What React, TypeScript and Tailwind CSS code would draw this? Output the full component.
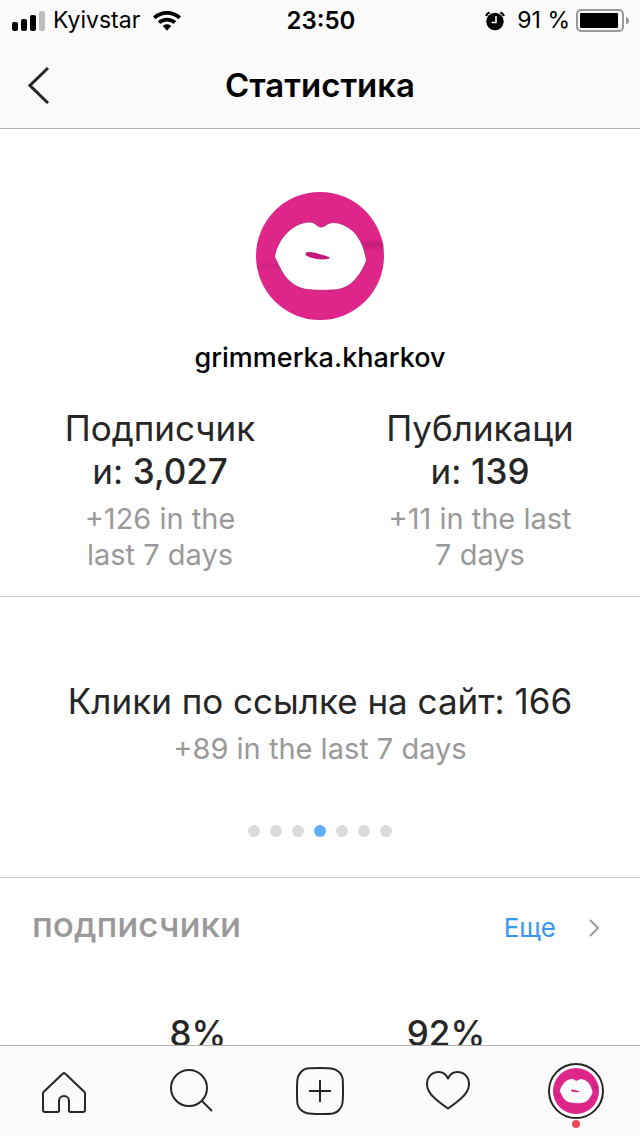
const periods = {
  followers: '+126 in the last 7 days',
  posts: '+11 in the last 7 days',
  clicks: '+89 in the last 7 days',
}

const slides = ['Показы', 'Охват', 'Просмотры профиля', 'Клики по ссылке', 'Эл. письма', 'Звонки', 'Маршруты']
const activeSlide = 3

export default function App() {
  return (
    <div className="flex h-screen flex-col bg-white font-['Inter','Liberation_Sans',sans-serif] text-[#262626]">
      <header className="shrink-0 border-b border-[#b2b2b2] bg-[#fbfbfb] text-black">
        <StatusBar />
        <div className="grid h-[87px] grid-cols-[1fr_auto_1fr] items-center px-7">
          <button type="button" aria-label="Назад" className="justify-self-start text-[#262626]">
            <svg width="22" height="38" viewBox="0 0 22 38" fill="none" stroke="currentColor" strokeWidth="3">
              <path d="M20 2 2 19.500 20 37" />
            </svg>
          </button>
          <h1 className="text-[33px] leading-11 font-semibold">Статистика</h1>
        </div>
      </header>

      <main className="min-h-0 flex-1 overflow-hidden">
        <section className="flex flex-col items-center border-b border-[#c7c7cc] pt-[63px] pb-[23px]">
          <LipsAvatar className="size-32" />
          <p className="mt-5 text-[27px] leading-9 font-medium text-black">grimmerka.kharkov</p>
          <div className="mt-[31px] grid w-full grid-cols-2 justify-items-center">
            <Stat label="Подписчики" value="3,027" note={periods.followers} />
            <Stat label="Публикации" value="139" note={periods.posts} />
          </div>
        </section>

        <section className="flex flex-col items-center border-b border-[#c7c7cc] pt-[82px] pb-10">
          <p className="text-[35px] leading-11">Клики по ссылке на сайт: 166</p>
          <p className="mt-2 text-[29px] leading-9 text-[#999]">{periods.clicks}</p>
          <div className="mt-[58px] flex gap-[10px]">
            {slides.map((slide, i) => (
              <button
                key={slide}
                type="button"
                aria-label={slide}
                className={i === activeSlide ? 'size-3 rounded-full bg-[#5eb0ff]' : 'size-3 rounded-full bg-[#dbdbdb]'}
              />
            ))}
          </div>
        </section>

        <section>
          <div className="flex items-baseline justify-between pt-6 pr-10 pl-8">
            <h2 className="text-[35px] leading-11 font-medium text-[#999]">подписчики</h2>
            <a href="#followers" className="flex items-center gap-8 text-[26px] text-[#3897f0]">
              Еще
              <svg width="12" height="18" viewBox="0 0 12 18" fill="none" stroke="#999" strokeWidth="2">
                <path d="m2 1 8 8-8 8" />
              </svg>
            </a>
          </div>
          <div className="flex justify-center pt-16 pl-1 text-[35px] leading-11 font-medium">
            <span className="w-62 text-center">8%</span>
            <span className="w-62 text-center">92%</span>
          </div>
        </section>
      </main>

      <TabBar />
    </div>
  )
}

function StatusBar() {
  return (
    <div className="grid h-[41px] grid-cols-[1fr_auto_1fr] items-center pr-[10px] pl-3 text-[23px]">
      <div className="flex items-center gap-[7px]">
        <svg width="34" height="22" viewBox="0 0 34 22">
          <rect x="0" y="12" width="6" height="9" rx="2" />
          <rect x="9" y="9" width="6" height="12" rx="2" />
          <rect x="18" y="5" width="6" height="16" rx="2" />
          <rect x="27" y="1" width="6" height="20" rx="2" fill="#bdbdbd" />
        </svg>
        <span>Kyivstar</span>
        <svg width="28" height="20" viewBox="0 0 28 20" className="ml-[6px]">
          <path d="M14 0C8.600 0 3.800 2 0 5.400l2.600 2.800C5.700 5.400 9.600 3.800 14 3.800s8.300 1.600 11.400 4.400L28 5.400C24.200 2 19.400 0 14 0Z" />
          <path d="M14 6.800c-3.500 0-6.700 1.300-9.200 3.500l2.600 2.800c1.800-1.500 4.100-2.500 6.600-2.500s4.800 1 6.600 2.500l2.600-2.800c-2.500-2.200-5.700-3.500-9.200-3.500Z" />
          <path d="M14 13.300c-1.600 0-3.100.6-4.300 1.500L14 19.700l4.300-4.900c-1.200-.9-2.700-1.500-4.300-1.500Z" />
        </svg>
      </div>
      <span className="text-[24px] font-semibold">23:50</span>
      <div className="flex items-center justify-end">
        <svg width="20" height="20" viewBox="0 0 20 20" className="mr-3">
          <circle cx="10" cy="10.500" r="8.700" />
          <path d="M1.200 5.200C1.500 3.400 2.900 2 4.700 1.500M18.800 5.200c-.3-1.800-1.700-3.200-3.500-3.700" fill="none" stroke="#000" strokeWidth="2" />
          <path d="M11 5v6.500H6.500" fill="none" stroke="#fbfbfb" strokeWidth="1.600" />
        </svg>
        <span className="mr-[6px]">91 %</span>
        <svg width="54" height="24" viewBox="0 0 54 24">
          <rect x="1" y="1" width="46" height="21" rx="4" fill="none" stroke="#999" strokeWidth="2" />
          <rect x="4" y="4" width="38" height="15" rx="1" />
          <path d="M50 8c2 .6 3 2 3 3.800s-1 3.200-3 3.800Z" fill="#999" />
        </svg>
      </div>
    </div>
  )
}

interface StatProps {
  label: string
  value: string
  note: string
}

function Stat({ label, value, note }: StatProps) {
  return (
    <div className="w-48 text-center">
      <p className="text-[35px] leading-[43px] break-words">
        {label}: <strong className="font-medium">{value}</strong>
      </p>
      <p className="mt-2 text-[29px] leading-9 text-[#999]">{note}</p>
    </div>
  )
}

function LipsAvatar({ className }: { className: string }) {
  return (
    <svg viewBox="0 0 128 128" className={className} role="img" aria-label="grimmerka.kharkov">
      <defs>
        <linearGradient id="crease" x1="0" y1="0" x2="0" y2="1">
          <stop offset="0" stopColor="#a81668" stopOpacity="0" />
          <stop offset="0.500" stopColor="#a81668" stopOpacity="0.500" />
          <stop offset="1" stopColor="#a81668" stopOpacity="0" />
        </linearGradient>
      </defs>
      <circle cx="64" cy="64" r="64" fill="#de258a" />
      <path d="M106 50 126 46Q128 53 128 59L108 58Z" fill="url(#crease)" />
      <path d="M0 68 20 70 24 77 2 80Z" fill="url(#crease)" opacity="0.500" />
      <path
        d="M18.500 65C20 55 26 44 35 37C43 31 53 28.500 58 31C61 33 62 35 65.500 35C69 35 70 32 74 31C82 29 92 34 99 41C105 48 109 58 110.500 68.500C107 78 101 87 94 92.500C88 96.500 82 98 76 98C68 98.500 56 98.500 48 97C40 95 33 90 28 83C24 77 22 71 18.500 65Z"
        fill="#fff"
        stroke="#b01b70"
        strokeWidth="0.800"
      />
      <path d="M49.500 61.500C51 59 58 60 65 62.500C70 64 74 65 74 66C72 68 60 68 53 65C51 64 49 63 49.500 61.500Z" fill="#c41b78" />
    </svg>
  )
}

function TabBar() {
  return (
    <nav className="grid h-[91px] shrink-0 grid-cols-5 border-t border-[#b2b2b2] bg-[#fbfbfb]">
      <a href="#home" aria-label="Главная" className="grid place-items-center">
        <svg width="48" height="48" viewBox="0 0 48 48" fill="none" stroke="currentColor" strokeWidth="2" strokeLinejoin="round">
          <path d="M23 6.500 3.500 25Q3 25.500 3 26.500V43q0 2 2 2h12.500q1.500 0 1.500-1.500V34a5 5 0 0 1 10 0v9.500q0 1.500 1.500 1.500H43q2 0 2-2V26.500Q45 25.500 44.500 25L25 6.500Q24 5.500 23 6.500Z" />
        </svg>
      </a>
      <a href="#search" aria-label="Поиск" className="grid place-items-center">
        <svg width="48" height="48" viewBox="0 0 48 48" fill="none" stroke="currentColor" strokeWidth="2">
          <circle cx="21" cy="21" r="18" />
          <path d="m34 34 10 10" />
        </svg>
      </a>
      <a href="#new" aria-label="Добавить" className="grid place-items-center">
        <svg width="48" height="48" viewBox="0 0 48 48" fill="none" stroke="currentColor" strokeWidth="2">
          <path d="M24 1C37 1 39 1.500 43 5S47 11 47 24 46.500 39 43 43 37 47 24 47 9 46.500 5 43 1 37 1 24 1.500 9 5 5 11 1 24 1Z" />
          <path d="M24 13v22M13 24h22" />
        </svg>
      </a>
      <a href="#activity" aria-label="Действия" className="grid place-items-center">
        <svg width="48" height="48" viewBox="0 0 48 48" fill="none" stroke="currentColor" strokeWidth="2" strokeLinejoin="round">
          <path d="M24 11.500C22 7 18 5 14.500 5C8 5 3 10 3 17C3 24 7 28 11 31.500C15 35 21 39.500 24 41.500C27 39.500 33 35 37 31.500C41 28 45 24 45 17C45 10 40 5 33.500 5C30 5 26 7 24 11.500Z" />
        </svg>
      </a>
      <a href="#profile" aria-label="Профиль" className="grid place-items-center">
        <span className="relative rounded-full border-2 border-[#262626] bg-white p-[3px]">
          <LipsAvatar className="size-[46px]" />
          <span className="absolute top-full left-1/2 mt-[3px] size-2 -translate-x-1/2 rounded-full bg-[#ed4956]" />
        </span>
      </a>
    </nav>
  )
}
